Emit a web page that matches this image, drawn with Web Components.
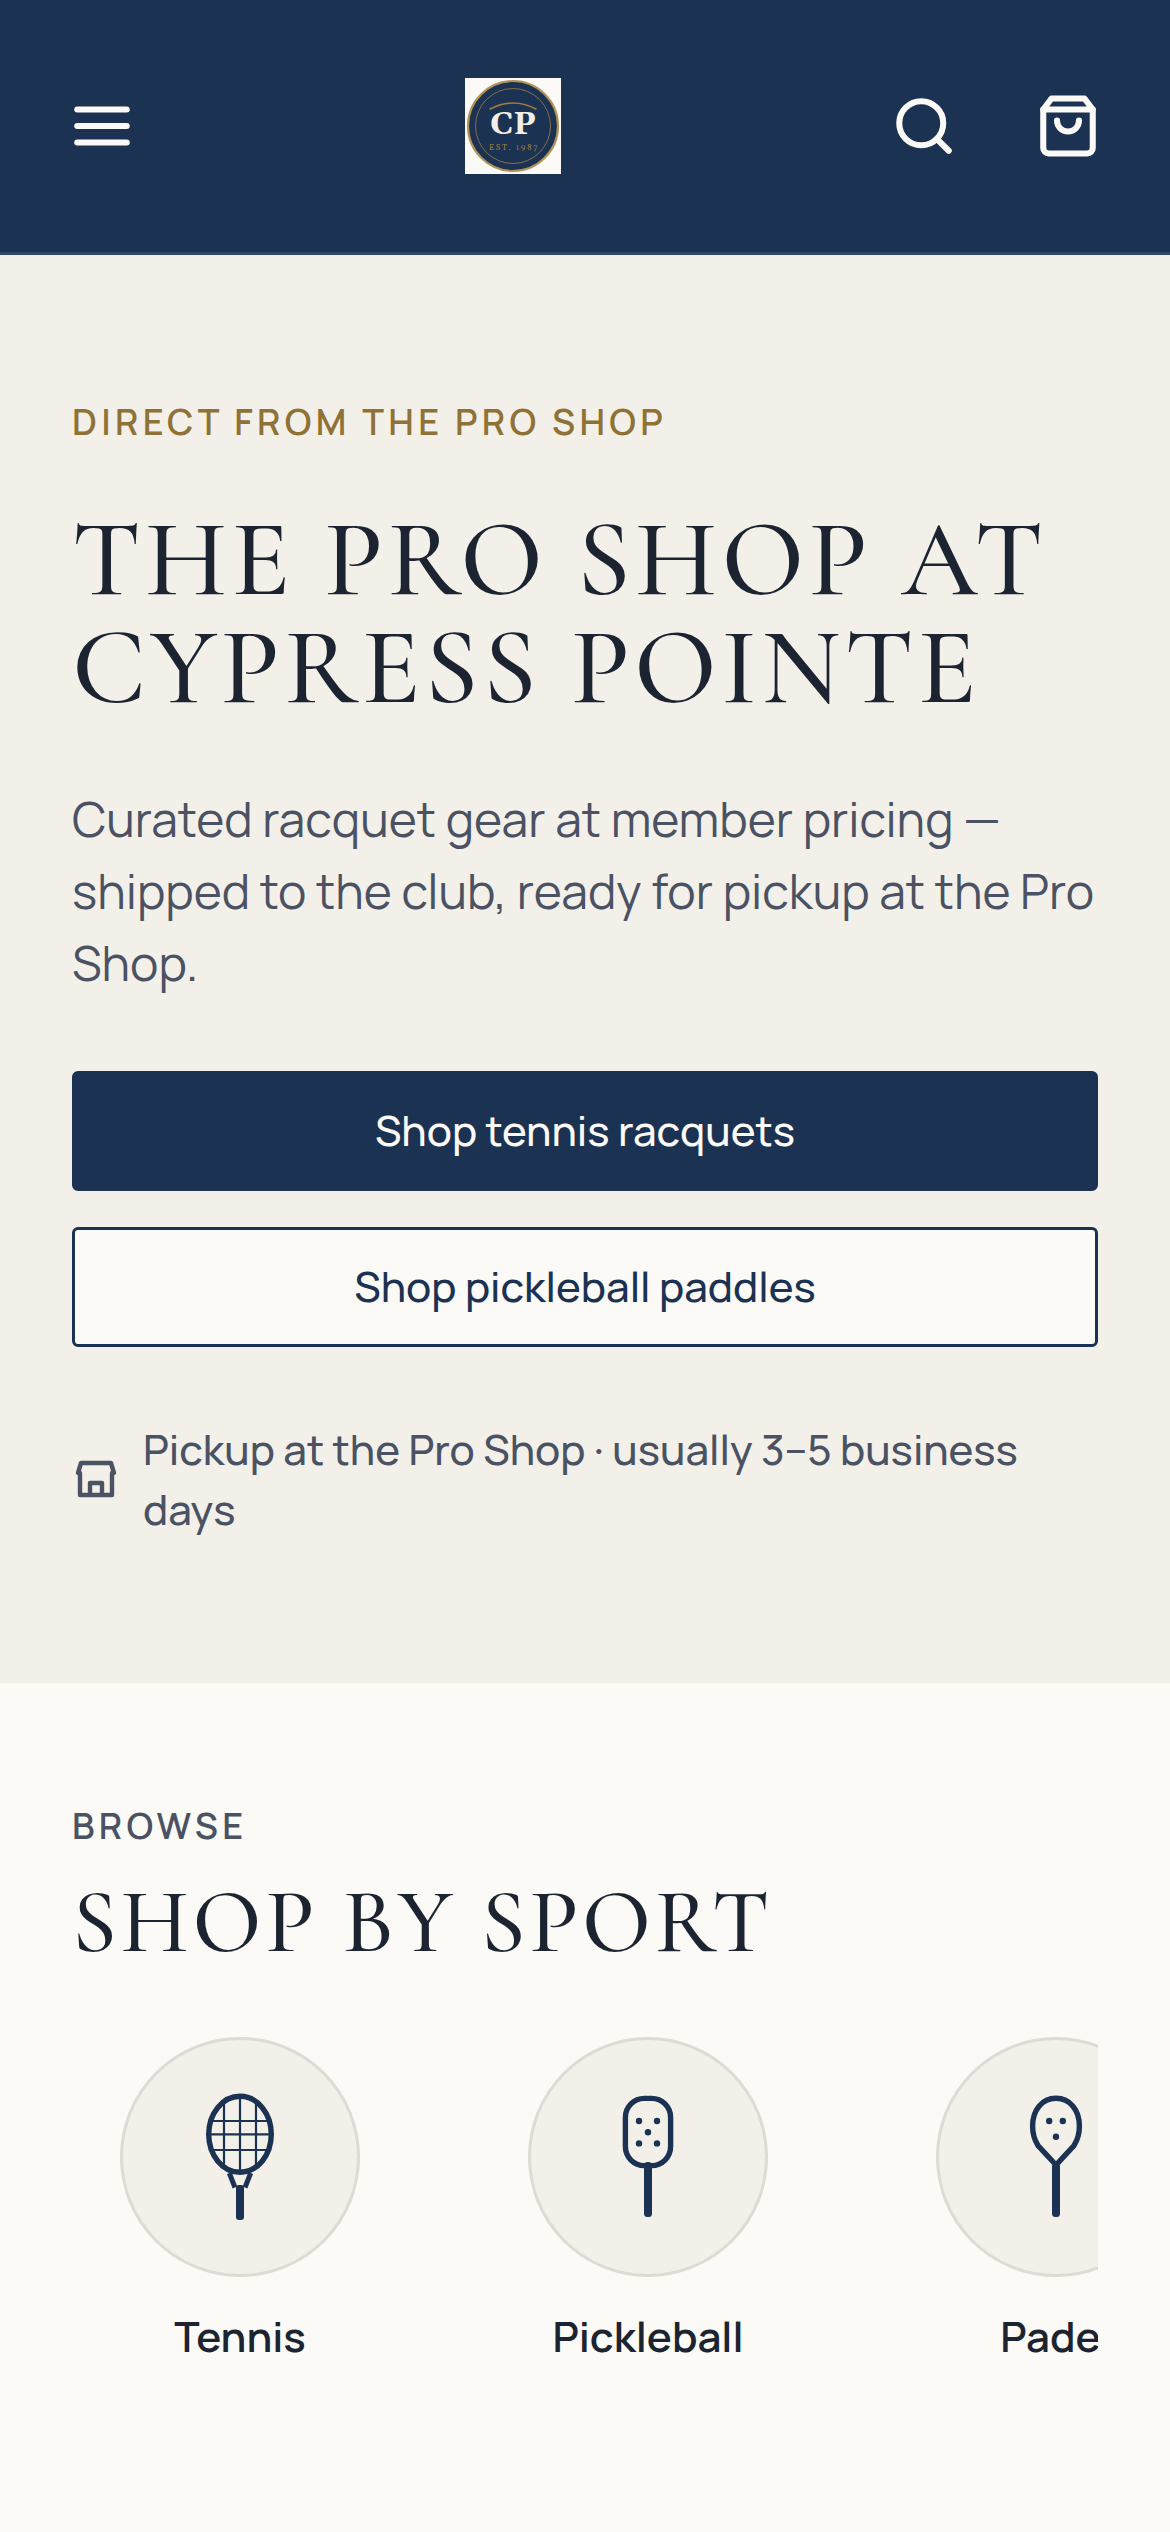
<!DOCTYPE html>
<html lang="en">
<head>
<meta charset="utf-8">
<meta name="viewport" content="width=device-width, initial-scale=1">
<title>The Pro Shop at Cypress Pointe</title>
<style>
    :root {
        --navy: #1c3252;
        --ink: #1b2430;
        --muted: #4a5263;
        --gold: #8f7236;
        --sand: #f3f0e9;
        --paper: #fbfaf7;
        --line: #dddbd3;
        --sans: Manrope, Inter, "Liberation Sans", sans-serif;
        --display: "Cormorant Garamond", "Liberation Serif", serif;
    }

    body {
        margin: 0;
        background: var(--paper);
        color: var(--ink);
        font-family: var(--sans);
    }
</style>
</head>
<body>
<shop-header></shop-header>
<main>
    <shop-hero>
        <span slot="eyebrow">Direct from the Pro Shop</span>
        <span slot="title">The Pro Shop at Cypress Pointe</span>
        <span slot="lead">Curated racquet gear at member pricing — shipped to the club, ready for pickup at the Pro Shop.</span>
        <shop-link slot="actions" href="#tennis" variant="primary">Shop tennis racquets</shop-link>
        <shop-link slot="actions" href="#pickleball">Shop pickleball paddles</shop-link>
        <span slot="note">Pickup at the Pro Shop · usually 3–5 business days</span>
    </shop-hero>
    <sport-browser>
        <span slot="eyebrow">Browse</span>
        <span slot="title">Shop by sport</span>
        <sport-tile sport="tennis">Tennis</sport-tile>
        <sport-tile sport="pickleball">Pickleball</sport-tile>
        <sport-tile sport="padel">Padel</sport-tile>
    </sport-browser>
</main>

<script>
const icons = {
    menu: `<path d="M3 6h18M3 12h18M3 18h18"/>`,
    search: `<circle cx="11" cy="11" r="8"/><path d="m21 21-4.35-4.35"/>`,
    bag: `<path d="M6 2 3 6v14a2 2 0 0 0 2 2h14a2 2 0 0 0 2-2V6l-3-4Z"/><path d="M3 6h18M16 10a4 4 0 0 1-8 0"/>`,
    store: `<path d="M3 9l1.5-5h15L21 9M4 9v11h16V9M9 20v-6h6v6"/>`
};

// Drawn round the centre of the tile's circle.
const sports = {
    tennis: `
        <ellipse cy="-22.7" rx="31.3" ry="38"/>
        <path stroke-width="2.2" d="M-16-55V9.5M0-60V15M16-55V9.5M-27-36H27M-31-22.7H31M-27-7H27"/>
        <path stroke-width="5" d="M-10.7 16-5 30.5M10.7 16 5 30.5"/>
        <rect class="fill" x="-4" y="28" width="8" height="35" rx="3"/>`,
    pickleball: `
        <rect x="-22.6" y="-58.6" width="45.2" height="67.2" rx="19"/>
        <g class="fill">
            <circle cx="-9" cy="-36" r="3.2"/><circle cx="9" cy="-36" r="3.2"/>
            <circle cy="-24.7" r="3.2"/>
            <circle cx="-9" cy="-13.6" r="3.2"/><circle cx="9" cy="-13.6" r="3.2"/>
            <rect x="-4" y="5" width="8" height="55" rx="3.5"/>
        </g>`,
    padel: `
        <path d="M0 8-18-11.5C-21.5-17-23.4-24-23.4-31-23.4-47-14-58.7 0-58.7S23.4-47 23.4-31C23.4-24 21.5-17 18-11.5Z"/>
        <g class="fill">
            <circle cx="-6.8" cy="-36" r="3.2"/><circle cx="6.8" cy="-36" r="3.2"/>
            <circle cy="-20.3" r="3.2"/>
            <rect x="-4" y="6" width="8" height="54" rx="3.5"/>
        </g>`
};

class ShopIcon extends HTMLElement {
    connectedCallback() {
        if (!this.shadowRoot) this.attachShadow({ mode: 'open' });
        this.shadowRoot.innerHTML = `
            <style>
                :host { display: block; flex: none; width: 66px; height: 66px; }
                svg { display: block; width: 100%; height: 100%; }
            </style>
            <svg viewBox="0 0 24 24" fill="none" stroke="currentColor" aria-hidden="true"
                stroke-width="2.2" stroke-linecap="round" stroke-linejoin="round">
                ${icons[this.getAttribute('name')] || ''}
            </svg>
        `;
    }
}

class ShopLogo extends HTMLElement {
    connectedCallback() {
        if (!this.shadowRoot) this.attachShadow({ mode: 'open' });
        this.shadowRoot.innerHTML = `
            <style>
                :host { display: block; width: 96px; height: 96px; }
                svg { display: block; background: var(--paper); }
                text { font-family: Georgia, Gelasio, "DejaVu Serif", serif; text-anchor: middle; }
            </style>
            <svg width="96" height="96" viewBox="0 0 96 96" role="img" aria-label="Cypress Pointe">
                <circle cx="48" cy="48" r="45" fill="#1c3252" stroke="#b0935a" stroke-width="2.2"/>
                <circle cx="48" cy="48" r="37.5" fill="none" stroke="#9a7f4a" stroke-width="0.8"/>
                <path d="M25 31Q48 19 71 31" fill="none" stroke="#a07c3c" stroke-width="1.6" stroke-linecap="round"/>
                <text x="48" y="56" font-size="32" font-weight="700" fill="#f3efe8">CP</text>
                <text x="49" y="72" font-size="8" letter-spacing="1.6" fill="#a07c3c">EST. 1987</text>
            </svg>
        `;
    }
}

class ShopHeader extends HTMLElement {
    connectedCallback() {
        if (!this.shadowRoot) this.attachShadow({ mode: 'open' });
        this.shadowRoot.innerHTML = `
            <style>
                :host { display: block; background: var(--navy); color: var(--paper); }
                header {
                    display: flex;
                    align-items: center;
                    justify-content: space-between;
                    padding: 60px 36px;
                    border-bottom: 3px solid #334766;
                }
                nav { display: flex; gap: 12px; }
                button {
                    display: grid;
                    place-items: center;
                    width: 132px;
                    height: 132px;
                    padding: 0;
                    border: 0;
                    background: none;
                    color: inherit;
                }
            </style>
            <header>
                <button type="button" aria-label="Menu"><shop-icon name="menu"></shop-icon></button>
                <a href="#home"><shop-logo></shop-logo></a>
                <nav>
                    <button type="button" aria-label="Search"><shop-icon name="search"></shop-icon></button>
                    <button type="button" aria-label="Cart"><shop-icon name="bag"></shop-icon></button>
                </nav>
            </header>
        `;
    }
}

class ShopLink extends HTMLElement {
    connectedCallback() {
        if (!this.shadowRoot) this.attachShadow({ mode: 'open' });
        this.shadowRoot.innerHTML = `
            <style>
                :host { display: block; }
                a {
                    display: block;
                    padding: 26px 48px 28px;
                    border: 3px solid var(--navy);
                    border-radius: 6px;
                    background: var(--paper);
                    color: var(--navy);
                    font-size: 42px;
                    font-weight: 500;
                    line-height: 60px;
                    text-align: center;
                    text-decoration: none;
                }
                :host([variant="primary"]) a { background: var(--navy); color: var(--paper); }
            </style>
            <a href="${this.getAttribute('href')}"><slot></slot></a>
        `;
    }
}

class ShopHero extends HTMLElement {
    connectedCallback() {
        if (!this.shadowRoot) this.attachShadow({ mode: 'open' });
        this.shadowRoot.innerHTML = `
            <style>
                :host { display: block; padding: 144px 72px; background: var(--sand); }
                p, h1 { margin: 0; }
                .eyebrow {
                    color: var(--gold);
                    font-size: 36px;
                    font-weight: 600;
                    line-height: 46px;
                    letter-spacing: 0.12em;
                    text-transform: uppercase;
                }
                h1 {
                    margin: 61px 0;
                    font-family: var(--display);
                    font-size: 108px;
                    font-weight: 500;
                    line-height: 108px;
                    letter-spacing: 0.04em;
                    text-transform: uppercase;
                }
                .lead { color: var(--muted); font-size: 48px; line-height: 72px; }
                .actions { display: grid; gap: 36px; margin: 72px 0; }
                .note {
                    display: flex;
                    align-items: center;
                    gap: 23px;
                    color: var(--muted);
                    font-size: 42px;
                    font-weight: 500;
                    line-height: 60px;
                }
                .note shop-icon { width: 48px; height: 48px; }
            </style>
            <p class="eyebrow"><slot name="eyebrow"></slot></p>
            <h1><slot name="title"></slot></h1>
            <p class="lead"><slot name="lead"></slot></p>
            <div class="actions"><slot name="actions"></slot></div>
            <p class="note"><shop-icon name="store"></shop-icon><slot name="note"></slot></p>
        `;
    }
}

class SportTile extends HTMLElement {
    connectedCallback() {
        const sport = this.getAttribute('sport');
        if (!this.shadowRoot) this.attachShadow({ mode: 'open' });
        this.shadowRoot.innerHTML = `
            <style>
                :host { display: block; flex: none; width: 336px; }
                a {
                    display: grid;
                    justify-items: center;
                    gap: 29px;
                    color: var(--ink);
                    font-size: 42px;
                    font-weight: 600;
                    line-height: 60px;
                    text-decoration: none;
                }
                .disc {
                    display: grid;
                    place-items: center;
                    box-sizing: border-box;
                    width: 240px;
                    height: 240px;
                    border: 3px solid var(--line);
                    border-radius: 50%;
                    background: var(--sand);
                }
                svg { fill: none; stroke: var(--navy); stroke-width: 5.4; }
                .fill { fill: var(--navy); stroke: none; }
            </style>
            <a href="#${sport}">
                <span class="disc">
                    <svg width="144" height="144" viewBox="-72 -72 144 144" aria-hidden="true">${sports[sport]}</svg>
                </span>
                <slot></slot>
            </a>
        `;
    }
}

class SportBrowser extends HTMLElement {
    connectedCallback() {
        if (!this.shadowRoot) this.attachShadow({ mode: 'open' });
        this.shadowRoot.innerHTML = `
            <style>
                :host { display: block; padding: 120px 72px; }
                p, h2 { margin: 0; }
                .eyebrow {
                    color: var(--muted);
                    font-size: 36px;
                    font-weight: 600;
                    line-height: 46px;
                    letter-spacing: 0.12em;
                    text-transform: uppercase;
                }
                h2 {
                    margin: 24px 0 64px;
                    font-family: var(--display);
                    font-size: 90px;
                    font-weight: 500;
                    line-height: 100px;
                    letter-spacing: 0.04em;
                    text-transform: uppercase;
                }
                .row { display: flex; gap: 72px; overflow-x: auto; scrollbar-width: none; }
            </style>
            <p class="eyebrow"><slot name="eyebrow"></slot></p>
            <h2><slot name="title"></slot></h2>
            <div class="row"><slot></slot></div>
        `;
    }
}

customElements.define('shop-icon', ShopIcon);
customElements.define('shop-logo', ShopLogo);
customElements.define('shop-header', ShopHeader);
customElements.define('shop-link', ShopLink);
customElements.define('shop-hero', ShopHero);
customElements.define('sport-tile', SportTile);
customElements.define('sport-browser', SportBrowser);
</script>
</body>
</html>
